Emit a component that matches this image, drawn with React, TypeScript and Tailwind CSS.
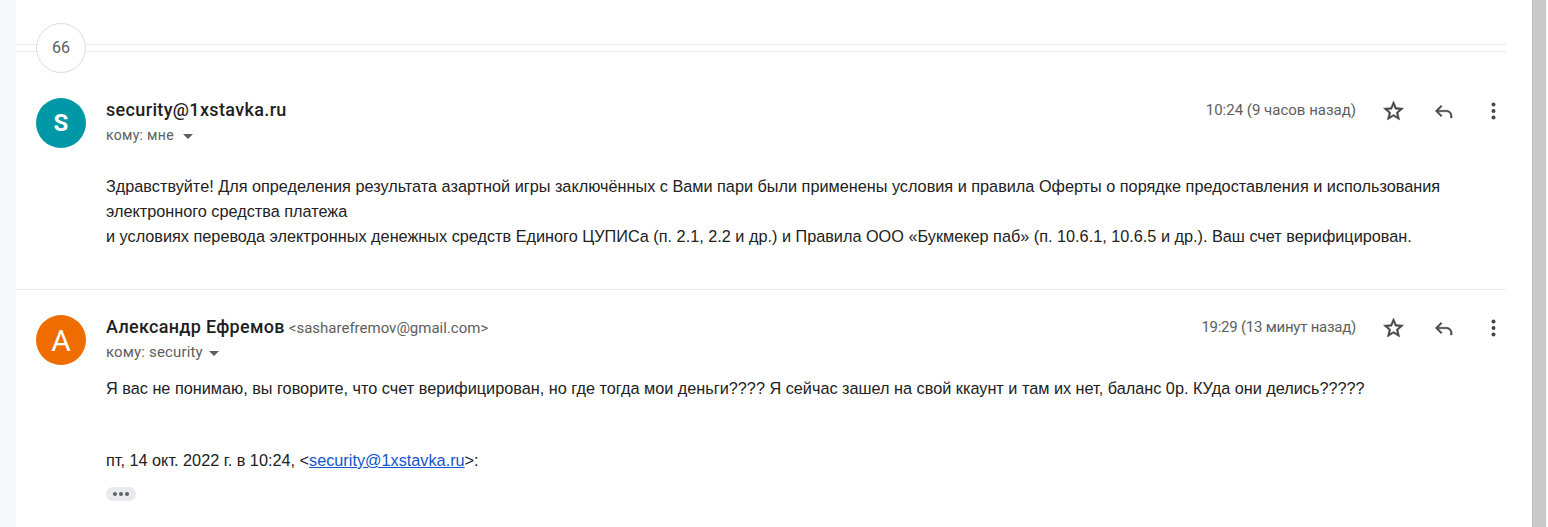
import React from "react";

const Star = () => (
  <svg width="24" height="24" viewBox="0 0 24 24" fill="#444746" stroke="#444746" strokeWidth="0.5" className="block">
    <path d="M22 9.24l-7.19-.62L12 2 9.19 8.63 2 9.24l5.46 4.73L5.82 21 12 17.27 18.18 21l-1.63-7.03L22 9.24zM12 15.4l-3.76 2.27 1-4.28-3.32-2.88 4.38-.38L12 6.1l1.71 4.04 4.38.38-3.32 2.88 1 4.28L12 15.4z" />
  </svg>
);
const Reply = () => (
  <svg width="24" height="24" viewBox="0 0 24 24" fill="#444746" stroke="#444746" strokeWidth="0.4" className="block">
    <path d="M9.500 6.300 3.800 12l5.700 5.700 1.100-1.100L6.800 12.800H15c2.200 0 4 1.800 4 4V19h1.600v-2.200c0-3.100-2.500-5.600-5.600-5.600H6.800l3.800-3.800z" />
  </svg>
);
const More = () => (
  <svg width="24" height="24" viewBox="0 0 24 24" fill="#444746" className="block">
    <circle cx="12" cy="5.500" r="2" />
    <circle cx="12" cy="12" r="2" />
    <circle cx="12" cy="18.500" r="2" />
  </svg>
);

const Actions = () => (
  <div className="flex items-center ml-[26px] mt-[1px] gap-[26px] translate-x-[-0.5px]">
    <Star />
    <Reply />
    <More />
  </div>
);

const Caret = ({ wide }: { wide?: boolean }) => (
  <span className={`${wide ? "ml-[9px]" : "ml-[6px]"} mt-[3px] w-0 h-0 border-x-[5px] border-x-transparent border-t-[5px] border-t-[#5e5e5e]`} />
);

const Avatar = ({ letter, color, big }: { letter: string; color: string; big?: boolean }) => (
  <div
    className={`w-[50px] h-[50px] rounded-full flex items-center justify-center text-white shrink-0 font-['Roboto',sans-serif] ${big ? "text-[30px]" : "text-[24px] font-bold"} ${color}`}
  >
    {letter}
  </div>
);

export default function App() {
  return (
    <div className="h-[527px] w-[1548px] flex overflow-hidden bg-[#f6f8fc] font-['Liberation_Sans',sans-serif]">
      <div className="w-4 shrink-0" />
      <main className="w-[1516px] shrink-0 bg-white pr-[26px]">
        <div className="relative mt-[44px] h-2 border-y border-[#e9ebed]">
          <div className="absolute left-5 top-[-22px] w-[50px] h-[50px] rounded-full border border-[#dadce0] bg-white flex items-center justify-center text-[16px] text-[#5e5e5e] font-['Roboto',sans-serif]">
            66
          </div>
        </div>

        <section className="pl-5 pt-[46px] border-b border-[#ebedef] h-[238px]">
          <div className="flex">
            <Avatar letter="S" color="bg-[#0097a7]" />
            <div className="ml-5 flex-1 min-w-0">
              <div className="flex items-start h-[28px]">
                <div className="flex-1 text-[18px] leading-[24px] font-medium text-[#1f1f1f] font-['Roboto',sans-serif] tracking-[0.35px]">
                  security@1xstavka.ru
                </div>
                <div className="text-[15px] leading-[24px] text-[#5e5e5e] font-['Roboto',sans-serif]">10:24 (9 часов назад)</div>
                <Actions />
              </div>
              <div className="flex items-center text-[14px] leading-[18px] text-[#5e5e5e] font-['Roboto',sans-serif] tracking-[0.3px]">
                кому: мне
                <Caret wide />
              </div>
            </div>
          </div>
          <div className="ml-[70px] mt-[26px] mr-[20px] text-[16.25px] leading-[25px] text-[#222222]">
            <div>Здравствуйте! Для определения результата азартной игры заключённых с Вами пари были применены условия и правила Оферты о порядке предоставления и использования</div>
            <div>электронного средства платежа</div>
            <div>и условиях перевода электронных денежных средств Единого ЦУПИСа (п. 2.1, 2.2 и др.) и Правила ООО «Букмекер паб» (п. 10.6.1, 10.6.5 и др.). Ваш счет верифицирован.</div>
          </div>
        </section>

        <section className="pl-5 pt-[25px]">
          <div className="flex">
            <Avatar letter="А" color="bg-[#ef6c00]" big />
            <div className="ml-5 flex-1 min-w-0">
              <div className="flex items-start h-[28px]">
                <div className="flex-1 flex items-baseline font-['Roboto',sans-serif]">
                  <span className="text-[18px] leading-[24px] font-medium text-[#1f1f1f] tracking-[0.3px]">Александр Ефремов</span>
                  <span className="ml-[4px] text-[15px] text-[#5e5e5e]">&lt;sasharefremov@gmail.com&gt;</span>
                </div>
                <div className="text-[15px] leading-[24px] text-[#5e5e5e] font-['Roboto',sans-serif] tracking-[-0.25px]">19:29 (13 минут назад)</div>
                <Actions />
              </div>
              <div className="flex items-center text-[15px] leading-[18px] text-[#5e5e5e] font-['Roboto',sans-serif] tracking-[0.15px]">
                кому: security
                <Caret />
              </div>
            </div>
          </div>
          <div className="ml-[70px] mt-[11px] text-[16.25px] leading-[25px] text-[#222222]">
            <div>Я вас не понимаю, вы говорите, что счет верифицирован, но где тогда мои деньги???? Я сейчас зашел на свой ккаунт и там их нет, баланс 0р. КУда они делись?????</div>
            <div className="mt-[47px]">
              пт, 14 окт. 2022 г. в 10:24, &lt;<span className="text-[#1155cc] underline">security@1xstavka.ru</span>&gt;:
            </div>
            <div className="mt-[14px] w-[30px] h-[14px] rounded-full bg-[#e8eaed] flex items-center justify-center gap-[2px]">
              <span className="w-1 h-1 rounded-full bg-[#5f6368]" />
              <span className="w-1 h-1 rounded-full bg-[#5f6368]" />
              <span className="w-1 h-1 rounded-full bg-[#5f6368]" />
            </div>
          </div>
        </section>
      </main>
      <div className="w-[14px] shrink-0 bg-[#c9c9c9] border-l border-[#bdbdbd]" />
    </div>
  );
}
